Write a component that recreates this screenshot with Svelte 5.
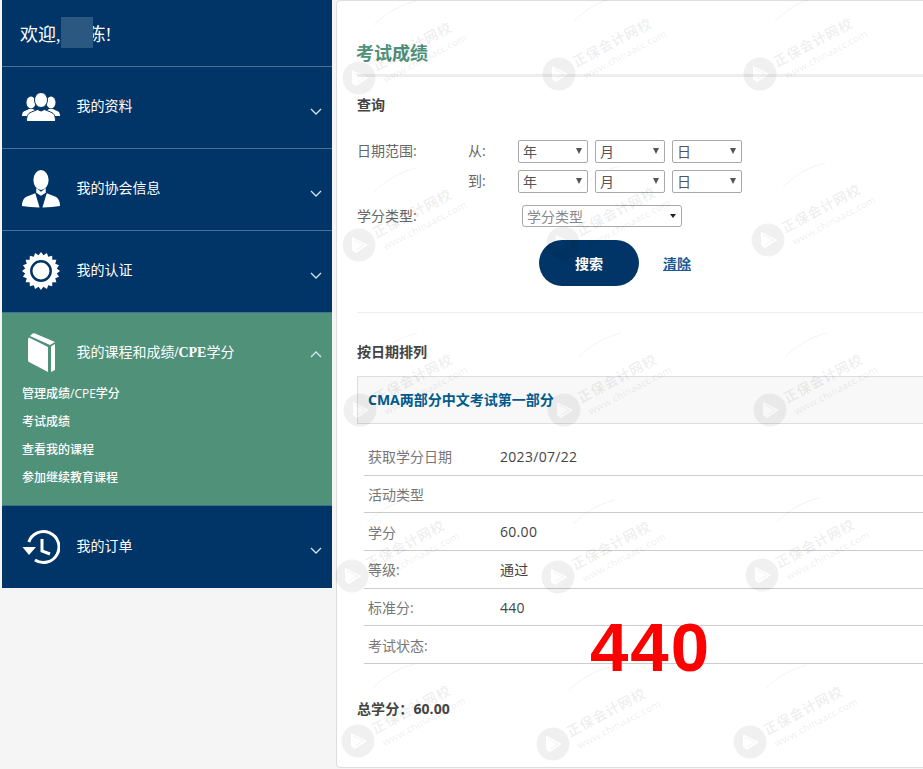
<script>
  const menuTop = [
    { label: "我的资料", icon: "people" },
    { label: "我的协会信息", icon: "man" },
    { label: "我的认证", icon: "sun" },
  ];
  const subLinks = ["管理成绩/CPE学分", "考试成绩", "查看我的课程", "参加继续教育课程"];
  const details = [
    { label: "获取学分日期", value: "2023/07/22" },
    { label: "活动类型", value: "" },
    { label: "学分", value: "60.00" },
    { label: "等级:", value: "通过" },
    { label: "标准分:", value: "440" },
    { label: "考试状态:", value: "" },
  ];
  const dateRows = [
    { label: "日期范围:", side: "从:" },
    { label: "", side: "到:" },
  ];
  // watermark logo centres, read off the screenshot
  const marks = [
    [359, 78], [559, 74], [760, 74],
    [359, 245], [563, 243], [768, 240],
    [360, 410], [564, 410], [770, 410],
    [352, 576], [558, 577], [762, 575],
    [358, 741], [553, 744], [750, 742],
  ];

  // 20 tooth gear outline for the certification icon
  const gear = Array.from({ length: 40 }, (_, i) => {
    const r = i % 2 ? 16 : 19;
    const a = (i * Math.PI) / 20;
    return `${(19 + r * Math.sin(a)).toFixed(2)},${(19 - r * Math.cos(a)).toFixed(2)}`;
  }).join(" ");
</script>

{#snippet chevron(up)}
  <svg class="chev" class:up width="12" height="8" viewBox="0 0 12 8">
    <path d={up ? "M1 7l5-5 5 5" : "M1 1l5 5 5-5"} fill="none" stroke="#d5e6f2" stroke-width="1.3" />
  </svg>
{/snippet}

{#snippet dateSelect(text)}
  <span class="date-select">
    <select><option>{text}</option></select>
  </span>
{/snippet}

<div class="page">
  <aside class="side">
    <div class="welcome">欢迎,<span class="redact"></span>陈!</div>

    {#each menuTop as item}
      <div class="item">
        <span class="ico">
          {#if item.icon === "people"}
            <svg width="38" height="28" viewBox="0 0 38 28" fill="#fff">
              <ellipse cx="9" cy="9.500" rx="4.500" ry="6" />
              <path d="M0 23c0-3 1-5 4-5.500l3-1.500h4l3 2-6 5z" />
              <ellipse cx="29" cy="9.500" rx="4.500" ry="6" />
              <path d="M38 23c0-3-1-5-4-5.500l-3-1.500h-4l-3 2 6 5z" />
              <ellipse cx="19" cy="7" rx="6.500" ry="7.500" stroke="#013567" stroke-width="1" />
              <path d="M4.500 28.500c0-5 1-8 5-9.500l6-2.500 3.500 1.500 3.500-1.500 6 2.500c4 1.500 5 4.500 5 9.500z" stroke="#013567" stroke-width="1" />
            </svg>
          {:else if item.icon === "man"}
            <svg width="39" height="40" viewBox="0 0 40 40" fill="#fff">
              <ellipse cx="20" cy="10.500" rx="8" ry="10.500" />
              <path d="M15 19l5 4 5-4v5l-5 3-5-3z" />
              <path d="M0 38c0-6 2-9 6-10.500l8-3 4.500 15c-7 0-13-.5-18.500-1.500z" />
              <path d="M40 38c0-6-2-9-6-10.500l-8-3-4.500 15c7 0 13-.5 18.500-1.500z" />
              <path d="M18.800 27.500h2.400l-.4 2 1 7-1.800 2.500-1.800-2.500 1-7z" fill="#013567" />
            </svg>
          {:else}
            <svg width="38" height="38" viewBox="0 0 38 38">
              <polygon points={gear} fill="#fff" />
              <circle cx="19" cy="19" r="9.700" fill="#fff" stroke="#013567" stroke-width="2.500" />
            </svg>
          {/if}
        </span>
        <span class="item-label">{item.label}</span>
        {@render chevron(false)}
      </div>
    {/each}

    <div class="open">
      <div class="item bare">
        <span class="ico">
          <svg width="38" height="40" viewBox="0 0 38 40" fill="#fff">
            <path d="M6 6.500c0-1.500 1-2 2-1.500l18 9v25L7 29c-1-.5-1-1-1-2z" />
            <path d="M8 3l2-2c1-1 2-1 3-.5L33 9l-5 3z" />
            <path d="M29 13.500l4-2.500v26l-4 2z" />
          </svg>
        </span>
        <span class="item-label">我的课程和成绩<b>/CPE</b>学分</span>
        {@render chevron(true)}
      </div>
      <ul class="subs">
        {#each subLinks as link}
          <li>{link}</li>
        {/each}
      </ul>
    </div>

    <div class="item last">
      <span class="ico">
        <svg width="38" height="36" viewBox="0 0 38 36" fill="none" stroke="#fff">
          <path d="M6.800 13A15.500 15.500 0 1 1 13 31" stroke-width="3" />
          <path d="M0.500 18h13.500l-7 8z" fill="#fff" stroke="none" />
          <path d="M20 10v12l8 3" stroke-width="3" />
        </svg>
      </span>
      <span class="item-label">我的订单</span>
      {@render chevron(false)}
    </div>
  </aside>

  <main class="card">
    <h1>考试成绩</h1>
    <h2 class="query">查询</h2>

    <div class="dates">
      {#each dateRows as row}
        <span class="form-label">{row.label}</span>
        <span class="form-side">{row.side}</span>
        <span class="selects">
          {@render dateSelect("年")}
          {@render dateSelect("月")}
          {@render dateSelect("日")}
        </span>
      {/each}
    </div>

    <div class="credit-row">
      <span class="form-label">学分类型:</span>
      <span class="credit-select">
        <select><option>学分类型</option></select>
      </span>
    </div>

    <div class="actions">
      <button type="button">搜索</button>
      <a href="#clear">清除</a>
    </div>

    <h2 class="sort">按日期排列</h2>
    <div class="course">CMA两部分中文考试第一部分</div>

    <dl class="rows">
      {#each details as row}
        <div class="row">
          <dt>{row.label}</dt>
          <dd>{row.value}</dd>
        </div>
      {/each}
    </dl>

    <p class="total">总学分：60.00</p>
  </main>

  <div class="big">440</div>

  {#each marks as [x, y]}
    <div class="mark" style="left: {x}px; top: {y}px">
      <svg class="mark-logo" width="34" height="34" viewBox="0 0 34 34">
        <path
          d="M17 .5a16.500 16.500 0 1 0 0 33a16.500 16.500 0 1 0 0-33zM10 9l16 8-12 8-4-3z"
          fill="#000"
          fill-rule="evenodd"
          opacity="0.06"
        />
        <path d="M12 12l10 5-8 5" fill="none" stroke="#000" opacity="0.05" />
        <path d="M32 -36c12 -12 26 -20 42 -24" fill="none" stroke="#000" opacity="0.05" />
      </svg>
      <span class="mark-cn">正保会计网校</span>
      <span class="mark-en">www.chinaacc.com</span>
    </div>
  {/each}
</div>

<style>
  :global(body) {
    background: #f5f5f5;
  }

  .page {
    position: relative;
    display: flex;
    gap: 4px;
    width: 923px;
    height: 769px;
    padding-left: 2px;
    box-sizing: border-box;
    overflow: hidden;
    font-family: "Open Sans", "Noto Sans CJK SC", sans-serif;
    font-size: 14px;
    color: #444;
  }

  .side {
    position: relative;
    z-index: 2;
    flex: 0 0 330px;
    height: 588px;
    background: #013567;
    color: #fff;
  }

  .welcome {
    display: flex;
    align-items: center;
    height: 67px;
    padding-left: 18px;
    box-sizing: border-box;
    border-bottom: 1px solid #4a6f94;
    font-family: "Liberation Serif", "Noto Sans CJK SC", serif;
    font-size: 18px;
  }

  .redact {
    position: relative;
    top: -1px;
    z-index: 1;
    width: 32px;
    height: 31px;
    margin: 0 -5px 0 0;
    background: #2a5880;
  }

  .item {
    position: relative;
    display: flex;
    align-items: center;
    height: 82px;
    box-sizing: border-box;
    padding: 0 0 5px 20px;
    border-bottom: 1px solid #4a6f94;
    font-family: "Liberation Serif", "Noto Sans CJK SC", serif;
    font-size: 14px;
  }

  .item.last {
    border-bottom: 0;
    height: 81px;
    padding-bottom: 3px;
  }

  .item.bare {
    border-bottom: 0;
    height: 76px;
    padding-bottom: 1px;
  }

  .ico {
    position: relative;
    top: 2px;
    display: flex;
    justify-content: center;
    flex: 0 0 38px;
    min-width: 0;
    margin-right: 16.500px;
  }

  .chev {
    position: absolute;
    right: 10px;
    top: 41px;
  }

  .chev.up {
    top: 37px;
  }

  .open {
    height: 194px;
    background: #50917a;
    border-top: 1px solid #3e6f8b;
    border-bottom: 1px solid #3e6f8b;
    box-sizing: border-box;
    margin-top: -1px;
  }

  .subs {
    list-style: none;
    margin: -9px 0 0;
    padding: 0 0 0 20px;
    font-size: 12px;
    font-weight: 500;
  }

  .subs li {
    height: 28px;
    line-height: 28px;
    color: #fff;
  }

  .card {
    flex: 0 0 640px;
    height: 768px;
    box-sizing: border-box;
    padding: 0 20px;
    background: #fff;
    border: 1px solid #ddd;
    border-radius: 4px;
  }

  h1 {
    margin: 0 -40px 0 0;
    padding-top: 38px;
    height: 76px;
    box-sizing: border-box;
    border-bottom: 3px solid #eee;
    font-size: 18px;
    line-height: 28px;
    font-weight: 700;
    text-indent: -1px;
    color: #50917a;
  }

  h2 {
    margin: 0;
    font-size: 14px;
    font-weight: 700;
    color: #444;
    line-height: 20px;
  }

  .query {
    margin-top: 18px;
  }

  .dates {
    display: grid;
    grid-template-columns: 111px 50px auto;
    row-gap: 7px;
    margin-top: 25px;
    align-items: center;
    width: 420px;
  }

  .form-label,
  .form-side {
    position: relative;
    top: -1px;
    font-size: 14px;
    line-height: 23px;
    color: #666;
  }

  .selects {
    display: flex;
    gap: 7px;
  }

  .date-select,
  .credit-select {
    position: relative;
    display: block;
  }

  .date-select::after,
  .credit-select::after {
    content: "";
    position: absolute;
    right: 6px;
    top: 8px;
    border-style: solid;
    border-width: 6px 3.500px 0;
    border-color: #555 transparent transparent;
    pointer-events: none;
  }

  .credit-select::after {
    top: 9px;
    border-width: 4px 3.500px 0;
    border-color: #222 transparent transparent;
  }

  select {
    display: block;
    appearance: none;
    width: 70px;
    height: 23px;
    padding: 0 0 2px 4px;
    border: 1px solid #a9a9a9;
    border-radius: 2px;
    background: transparent;
    font: 14px "Noto Sans CJK SC", sans-serif;
    color: #555;
  }

  .credit-row {
    display: flex;
    align-items: center;
    margin-top: 11px;
  }

  .credit-row .form-label {
    flex: 0 0 165px;
    top: 0;
  }

  .credit-select select {
    width: 160px;
    height: 22px;
    font-size: 14px;
    color: #888;
    border-radius: 3px;
  }

  .actions {
    display: flex;
    align-items: center;
    gap: 24px;
    height: 46px;
    margin: 13px -40px 0 0;
    padding: 0 0 26px 182px;
    border-bottom: 1px solid #eee;
  }

  button {
    width: 100px;
    height: 46px;
    border: 0;
    border-radius: 23px;
    background: #013567;
    color: #fff;
    font: 700 14px "Noto Sans CJK SC", sans-serif;
  }

  a {
    color: #1a5a96;
    font-weight: 700;
    font-size: 14px;
  }

  .sort {
    margin-top: 29px;
  }

  .course {
    height: 48px;
    line-height: 46px;
    margin: 14px -40px 0 0;
    padding-left: 10px;
    box-sizing: border-box;
    border: 1px solid #ddd;
    background: #f8f8f8;
    font-weight: 700;
    font-size: 14px;
    color: #005a8c;
  }

  .rows {
    margin: 14px -40px 0 7px;
  }

  .row {
    display: flex;
    align-items: center;
    height: 37.700px;
    box-sizing: border-box;
    padding-left: 4px;
    border-bottom: 1px solid #ccc;
  }

  dt {
    flex: 0 0 132px;
    font-size: 14px;
    color: #777;
  }

  dd {
    margin: 0;
    font-size: 14px;
    letter-spacing: 0.3px;
    color: #444;
  }

  .total {
    margin: 35px 0 0;
    font-size: 14px;
    line-height: 20px;
    font-weight: 700;
    letter-spacing: 0.1px;
    color: #444;
  }

  .big {
    position: absolute;
    z-index: 3;
    left: 590px;
    top: 608px;
    font: 700 69px/80px "Liberation Sans", sans-serif;
    letter-spacing: 2px;
    color: #ff0000;
  }

  .mark {
    position: absolute;
    z-index: 1;
    width: 0;
    height: 0;
    pointer-events: none;
  }

  .mark-logo {
    position: absolute;
    left: -17px;
    top: -17px;
    overflow: visible;
  }

  .mark-cn,
  .mark-en {
    position: absolute;
    white-space: nowrap;
    transform-origin: left bottom;
    transform: rotate(-28deg);
    color: rgba(0, 0, 0, 0.07);
  }

  .mark-cn {
    left: 19px;
    bottom: 3px;
    font-size: 14px;
    font-weight: 700;
    letter-spacing: 0.500px;
  }

  .mark-en {
    left: 28px;
    bottom: -8px;
    font-size: 10px;
    font-weight: 600;
  }
</style>
